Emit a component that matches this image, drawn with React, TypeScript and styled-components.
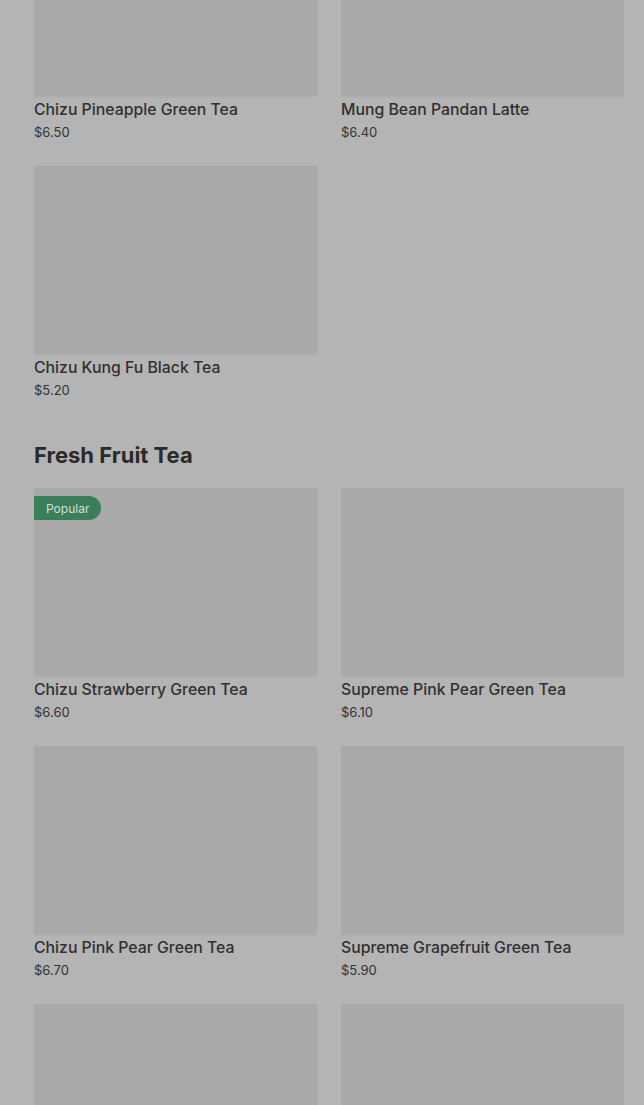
import styled, { createGlobalStyle } from 'styled-components';

type Item = { name: string; price: string; badge?: string };

const topItems: Item[] = [
  { name: 'Chizu Pineapple Green Tea', price: '$6.50' },
  { name: 'Mung Bean Pandan Latte', price: '$6.40' },
  { name: 'Chizu Kung Fu Black Tea', price: '$5.20' },
];

const fruitItems: Item[] = [
  { name: 'Chizu Strawberry Green Tea', price: '$6.60', badge: 'Popular' },
  { name: 'Supreme Pink Pear Green Tea', price: '$6.10' },
  { name: 'Chizu Pink Pear Green Tea', price: '$6.70' },
  { name: 'Supreme Grapefruit Green Tea', price: '$5.90' },
  { name: 'Chizu Lychee Green Tea', price: '$6.60' },
  { name: 'Supreme Mango Green Tea', price: '$6.10' },
];

export default function App() {
  return (
    <>
      <GlobalStyle />
      <Page>
        <Grid>
          {topItems.map((item) => (
            <ProductCard key={item.name} item={item} />
          ))}
        </Grid>
        <SectionTitle>Fresh Fruit Tea</SectionTitle>
        <Grid>
          {fruitItems.map((item) => (
            <ProductCard key={item.name} item={item} />
          ))}
        </Grid>
      </Page>
    </>
  );
}

function ProductCard({ item }: { item: Item }) {
  return (
    <Card>
      <Thumb>{item.badge && <Badge>{item.badge}</Badge>}</Thumb>
      <Name>{item.name}</Name>
      <Price>{item.price}</Price>
    </Card>
  );
}

const GlobalStyle = createGlobalStyle`
  html, body {
    margin: 0;
    padding: 0;
    background: #b4b4b4;
    overflow: hidden;
  }
  body {
    font-family: Inter, "Noto Sans", "Liberation Sans", sans-serif;
    color: #2e2e2e;
  }
`;

// page is scrolled part way down the menu
const Page = styled.main`
  margin-top: -92px;
  padding: 0 20px 0 34px;
  height: 1300px;
  background: #b4b4b4;
`;

const Grid = styled.div`
  display: grid;
  grid-template-columns: 283px 283px;
  column-gap: 24px;
  row-gap: 25px;
`;

const Card = styled.div`
  display: flex;
  flex-direction: column;
`;

const Thumb = styled.div`
  position: relative;
  height: 188px;
  background: #a9a9a9;
  box-shadow: 0 1px 0 #aeaeae, 0 2px 0 #b1b1b1;
`;

const Badge = styled.span`
  position: absolute;
  top: 8px;
  left: 0;
  height: 24px;
  padding: 0 12px;
  display: flex;
  align-items: center;
  border-radius: 0 12px 12px 0;
  background: #3a7e5a;
  color: #d6dfda;
  font-size: 12px;
  font-weight: 400;
`;

const Name = styled.div`
  margin-top: 3px;
  font-size: 15.8px;
  line-height: 22px;
  font-weight: 500;
  color: #303030;
`;

const Price = styled.div`
  margin-top: 2px;
  font-size: 13px;
  line-height: 18px;
  color: #333;
`;

const SectionTitle = styled.h2`
  margin: 40px 0 17px;
  font-size: 22px;
  line-height: 32px;
  font-weight: 700;
  letter-spacing: 0;
  color: #2a2a2a;
`;
